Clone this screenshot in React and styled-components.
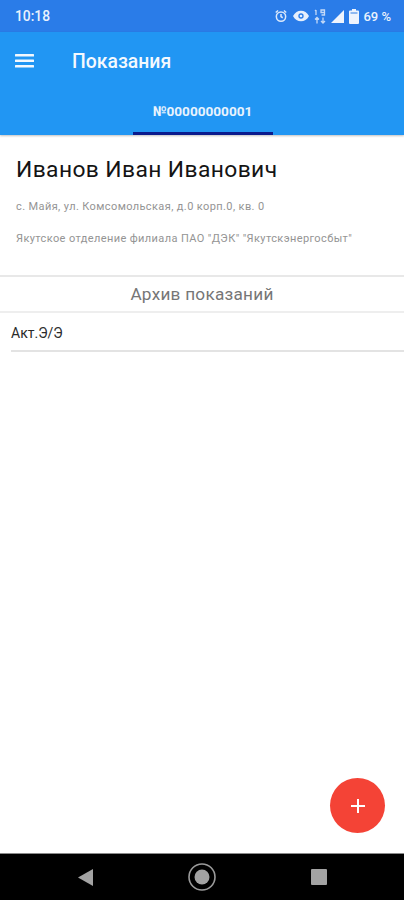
import React from 'react';
import styled, { createGlobalStyle } from 'styled-components';

const GlobalStyle = createGlobalStyle`
  html, body {
    margin: 0;
    padding: 0;
    background: #ffffff;
    font-family: Roboto, "Noto Sans", sans-serif;
  }
`;

const Screen = styled.div`
  width: 404px;
  height: 900px;
  display: flex;
  flex-direction: column;
  overflow: hidden;
  position: relative;
`;

const StatusBar = styled.div`
  height: 32px;
  background: #2a7ce8;
  color: #e9f2fd;
  display: flex;
  align-items: center;
  justify-content: space-between;
  padding: 0 13px 0 15px;
  font-size: 13.8px;
  font-weight: 500;
`;

const StatusIcons = styled.div`
  display: flex;
  align-items: center;
  gap: 5px;
`;

const Percent = styled.span`
  font-size: 13px;
  margin-left: -1px;
`;

const AppBar = styled.div`
  background: #2196f3;
  height: 103px;
  display: flex;
  flex-direction: column;
  box-shadow: 0 1px 2px rgba(0, 0, 0, 0.25);
`;

const TitleRow = styled.div`
  height: 58px;
  display: flex;
  align-items: center;
  padding-left: 15px;
`;

const Title = styled.div`
  color: #f4f9fe;
  font-size: 19.4px;
  font-weight: 500;
  margin-left: 37px;
`;

const Tabs = styled.div`
  flex: 1;
  display: flex;
  justify-content: center;
  padding-left: 2px;
`;

const Tab = styled.div`
  width: 140px;
  display: flex;
  align-items: center;
  justify-content: center;
  color: #e8f3fd;
  font-size: 13.6px;
  font-weight: 700;
  padding-right: 1px;
  border-bottom: 3px solid #0a1a8c;
  box-sizing: border-box;
`;

const Customer = styled.div`
  padding: 21px 16px 0;
  height: 142px;
  box-sizing: border-box;
  border-bottom: 2px solid #e8e8e8;
`;

const Name = styled.div`
  font-size: 22.8px;
  line-height: 28px;
  color: #141414;
  letter-spacing: 0.4px;
`;

const Meta = styled.div`
  font-size: 11px;
  line-height: 14px;
  letter-spacing: 0.39px;
  color: #949494;
  margin-top: ${(props) => props.$top}px;
`;

const ArchiveTitle = styled.div`
  height: 36px;
  box-sizing: border-box;
  border-bottom: 2px solid #eeeeee;
  display: flex;
  align-items: center;
  justify-content: center;
  color: #767676;
  font-size: 17.2px;
  letter-spacing: 0.25px;
`;

const ListItem = styled.div`
  margin-left: 11px;
  height: 39px;
  box-sizing: border-box;
  padding-top: 2px;
  border-bottom: 2px solid #e3e3e3;
  display: flex;
  align-items: center;
  color: #2a2a2a;
  font-size: 14px;
`;

const Content = styled.div`
  flex: 1;
`;

const Fab = styled.button`
  position: absolute;
  right: 19px;
  bottom: 67px;
  width: 55px;
  height: 55px;
  border: none;
  padding: 0;
  border-radius: 50%;
  background: #f44336;
  display: flex;
  align-items: center;
  justify-content: center;
`;

const NavBar = styled.div`
  height: 47px;
  background: #000000;
  border-top: 1px solid #8a8a8a;
  box-sizing: border-box;
  display: flex;
  align-items: center;
  justify-content: center;
`;

const NavSlot = styled.div`
  width: 117px;
  display: flex;
  justify-content: center;
`;

const MenuIcon = () => (
  <svg width="20" height="14" viewBox="0 0 20 14" fill="#f2f8fe">
    <rect x="0" y="0" width="19" height="2.5" rx="0.5" />
    <rect x="0" y="5.5" width="19" height="2.5" rx="0.5" />
    <rect x="0" y="11" width="19" height="2.5" rx="0.5" />
  </svg>
);

const AlarmIcon = () => (
  <svg width="14" height="14" viewBox="0 0 24 24" fill="none" stroke="#dbe8fb" strokeWidth="2.6">
    <circle cx="12" cy="13" r="8" />
    <path d="M12 8.5V13l3 2M3 6l4-3.5M21 6l-4-3.5" />
  </svg>
);

const EyeIcon = () => (
  <svg width="16" height="12" viewBox="0 0 24 18" fill="#e6effc">
    <path d="M0 9C3 3.500 7 1 12 1s9 2.500 12 8c-3 5.500-7 8-12 8S3 14.500 0 9z" />
    <circle cx="12" cy="9" r="4" fill="#2a7ce8" />
    <circle cx="12" cy="9" r="2" />
  </svg>
);

const DataIcon = () => (
  <svg width="12" height="15" viewBox="0 0 12 15" fill="none" stroke="#c4d9f7" strokeWidth="1.3">
    <path d="M2 1v5M1 2l1-1M7 1h3.500v2.500H7zM10.500 1v5H7.500M3 8.500v6M1 10.500l2-2 2 2M9 14V8.500M7 12l2 2 2-2" />
  </svg>
);

const SignalIcon = () => (
  <svg width="13" height="13" viewBox="0 0 13 13" fill="#eef4fd">
    <path d="M13 0v13H0z" />
  </svg>
);

const BatteryIcon = () => (
  <svg width="10" height="15" viewBox="0 0 10 15">
    <path d="M3 0h4v1.500h2a1 1 0 0 1 1 1V14a1 1 0 0 1-1 1H1a1 1 0 0 1-1-1V2.500a1 1 0 0 1 1-1h2z" fill="#eef4fd" />
    <rect x="1.500" y="3" width="7" height="2" fill="#8fb9f1" />
  </svg>
);

const PlusIcon = () => (
  <svg width="14" height="14" viewBox="0 0 14 14" fill="#ffffff">
    <rect x="6" y="0" width="2" height="14" />
    <rect x="0" y="6" width="14" height="2" />
  </svg>
);

const BackIcon = () => (
  <svg width="15" height="17" viewBox="0 0 15 17" fill="#a3a3a3">
    <path d="M15 0v17L0 8.500z" />
  </svg>
);

const HomeIcon = () => (
  <svg width="28" height="28" viewBox="0 0 28 28">
    <circle cx="14" cy="14" r="13" fill="none" stroke="#9a9a9a" strokeWidth="1.6" />
    <circle cx="14" cy="14" r="7.500" fill="#a3a3a3" />
  </svg>
);

const SquareIcon = () => (
  <svg width="16" height="16" viewBox="0 0 16 16" fill="#a3a3a3">
    <rect width="16" height="16" rx="1" />
  </svg>
);

const App = () => {
  return (
    <Screen>
      <GlobalStyle />
      <StatusBar>
        <span>10:18</span>
        <StatusIcons>
          <AlarmIcon />
          <EyeIcon />
          <DataIcon />
          <SignalIcon />
          <BatteryIcon />
          <Percent>69 %</Percent>
        </StatusIcons>
      </StatusBar>
      <AppBar>
        <TitleRow>
          <MenuIcon />
          <Title>Показания</Title>
        </TitleRow>
        <Tabs>
          <Tab>№00000000001</Tab>
        </Tabs>
      </AppBar>
      <Customer>
        <Name>Иванов Иван Иванович</Name>
        <Meta $top={16}>с. Майя, ул. Комсомольская, д.0 корп.0, кв. 0</Meta>
        <Meta $top={18}>Якутское отделение филиала ПАО "ДЭК" "Якутскэнергосбыт"</Meta>
      </Customer>
      <ArchiveTitle>Архив показаний</ArchiveTitle>
      <ListItem>Акт.Э/Э</ListItem>
      <Content />
      <Fab aria-label="Добавить">
        <PlusIcon />
      </Fab>
      <NavBar>
        <NavSlot><BackIcon /></NavSlot>
        <NavSlot><HomeIcon /></NavSlot>
        <NavSlot><SquareIcon /></NavSlot>
      </NavBar>
    </Screen>
  );
};

export default App;
